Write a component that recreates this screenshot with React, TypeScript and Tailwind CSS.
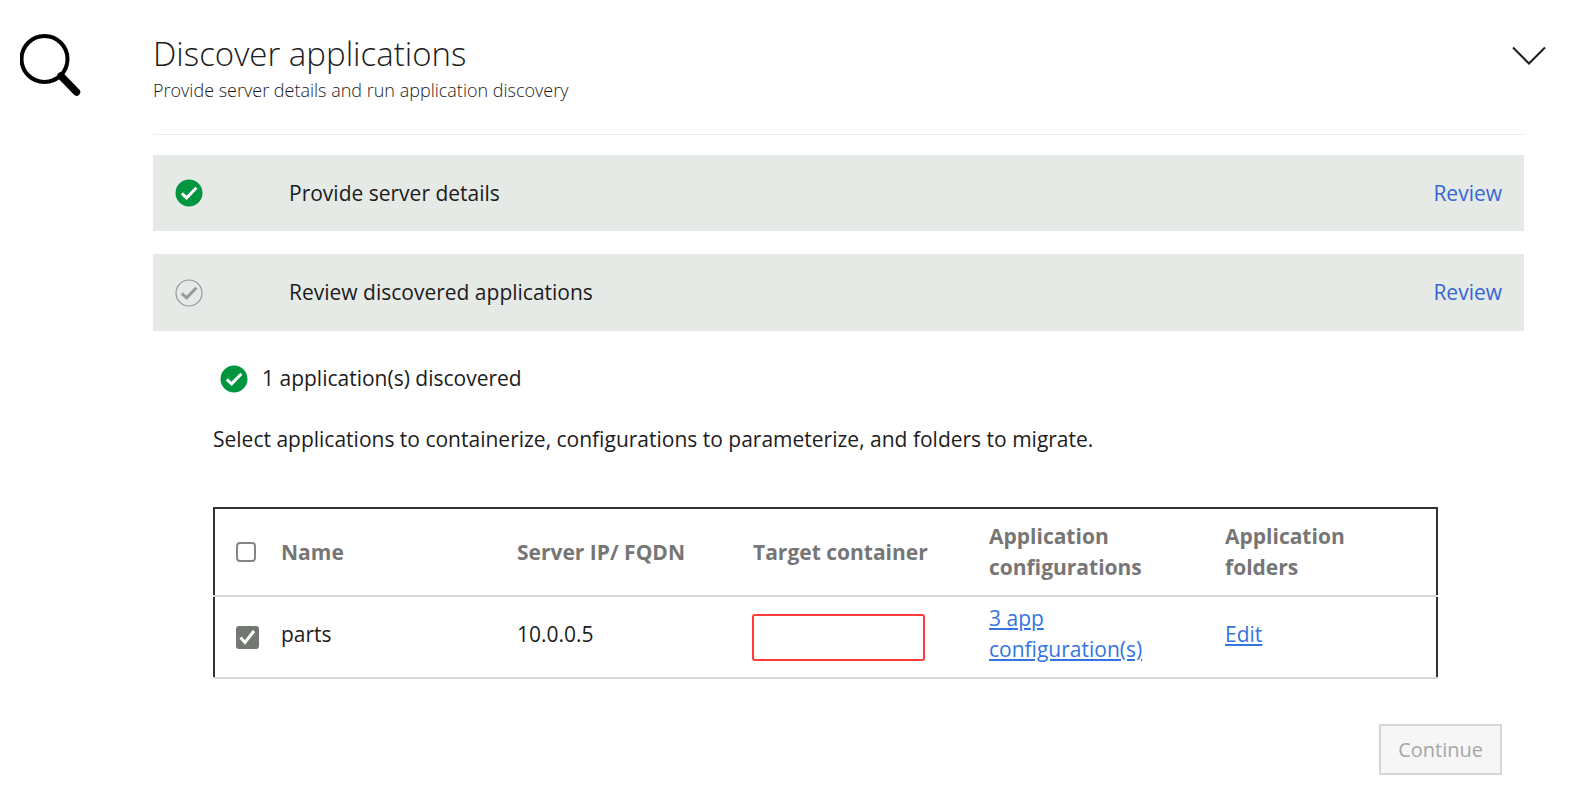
import React from "react";

function DoneIcon() {
  return (
    <svg viewBox="0 0 28 28" className="size-7 shrink-0" aria-hidden="true">
      <circle cx="14" cy="14" r="13.5" fill="#009640" />
      <path d="M6.8 14.4l4.8 4.4L21.4 8.8" fill="none" stroke="#fff" strokeWidth="3" />
    </svg>
  );
}

function PendingIcon() {
  return (
    <svg viewBox="0 0 28 28" className="size-7 shrink-0" aria-hidden="true">
      <circle cx="14" cy="14" r="13" fill="none" stroke="#979a98" strokeWidth="1.2" />
      <path d="M6.8 14.4l4.8 4.4L21.4 8.8" fill="none" stroke="#979a98" strokeWidth="3" />
    </svg>
  );
}

function Step({ icon, title, className }: { icon: React.ReactNode; title: string; className: string }) {
  return (
    <section className={`flex items-center bg-[#e5eae6] px-[22px] ${className}`}>
      {icon}
      <h2 className="ml-[86px] grow">{title}</h2>
      <a href="#review" className="text-[#3566d8]">
        Review
      </a>
    </section>
  );
}

const headings = ["Name", "Server IP/ FQDN", "Target container", "Application configurations", "Application folders"];

export default function App() {
  return (
    <main className="flex min-h-screen items-start bg-white pt-8 pr-[60px] pl-5 font-['Open_Sans','Noto_Sans',sans-serif] text-[21px] leading-[31px] text-[#1c1c1c]">
      <svg viewBox="0 0 64 64" className="size-16 shrink-0" fill="none" stroke="#000" aria-hidden="true">
        <circle cx="24.5" cy="27" r="23" strokeWidth="4" />
        <path d="M41 44L56.5 60" strokeWidth="7.5" strokeLinecap="round" />
        <path d="M38 43L43 42L45 44L40 48Z" fill="#000" stroke="none" />
      </svg>

      <div className="ml-[69px] min-w-0 grow">
        <header className="flex items-start justify-between border-b border-[#ededed] pb-[30px]">
          <div className="font-light">
            <h1 className="text-[33px] leading-[44px]">Discover applications</h1>
            <p className="text-[18px] leading-7">Provide server details and run application discovery</p>
          </div>
          <button type="button" aria-label="Collapse section" className="-mr-[23px] mt-[13px]">
            <svg viewBox="0 0 36 22" className="h-[22px] w-9" fill="none" stroke="#1c1c1c" strokeWidth="2" aria-hidden="true">
              <path d="M2 2.5L18 18.5L34 2.5" />
            </svg>
          </button>
        </header>

        <Step icon={<DoneIcon />} title="Provide server details" className="mt-5 h-[76px]" />
        <Step icon={<PendingIcon />} title="Review discovered applications" className="mt-[23px] h-[77px]" />

        <div className="pt-8 pl-[60px]">
          <div className="flex items-center gap-3.5 pl-[7px]">
            <DoneIcon />
            <p>1 application(s) discovered</p>
          </div>
          <p className="mt-[30px]">
            Select applications to containerize, configurations to parameterize, and folders to migrate.
          </p>

          <div className="mt-[52px] pr-[86px]">
            <table className="w-full table-fixed border-collapse border-x-2 border-t-2 border-[#333] text-left">
              <colgroup>
                <col className="w-[58px]" />
                <col className="w-[236px]" />
                <col className="w-[236px]" />
                <col className="w-[236px]" />
                <col className="w-[236px]" />
                <col />
              </colgroup>
              <thead>
                <tr className="h-[88px] border-b-2 border-b-[#d8d8d8]">
                  <th className="pl-[21px]">
                    <input
                      type="checkbox"
                      aria-label="Select all applications"
                      className="block size-5 appearance-none rounded-[4px] border-2 border-[#858585]"
                    />
                  </th>
                  {headings.map((heading) => (
                    <th key={heading} scope="col" className="pr-10 pl-[9px] font-bold text-[#767676]">
                      {heading}
                    </th>
                  ))}
                </tr>
              </thead>
              <tbody>
                <tr className="border-b-2 border-b-[#d8d8d8]">
                  <td className="pl-[21px]">
                    <span className="grid size-[23px]">
                      <input
                        type="checkbox"
                        defaultChecked
                        aria-label="Select parts"
                        className="peer col-start-1 row-start-1 size-[23px] appearance-none rounded-[3px] border-2 border-[#737873] checked:bg-[#737873]"
                      />
                      <svg
                        viewBox="0 0 23 23"
                        className="pointer-events-none invisible col-start-1 row-start-1 size-[23px] peer-checked:visible"
                        fill="none"
                        stroke="#fff"
                        strokeWidth="3"
                        aria-hidden="true"
                      >
                        <path d="M4.5 11.5L9 16.5L18 5" />
                      </svg>
                    </span>
                  </td>
                  <td className="pt-1.5 pb-3 pl-[9px]">parts</td>
                  <td className="pt-1.5 pb-3 pl-[9px]">10.0.0.5</td>
                  <td className="pl-2">
                    <input
                      type="text"
                      aria-label="Target container for parts"
                      className="block h-[47px] w-[173px] rounded-[3px] border-2 border-[#ff3b3b] px-2"
                    />
                  </td>
                  <td className="pt-1.5 pr-10 pb-3 pl-[9px]">
                    <a href="#configurations" className="text-[#3575e0] underline">
                      3 app configuration(s)
                    </a>
                  </td>
                  <td className="pt-1.5 pb-3 pl-[9px]">
                    <a href="#folders" className="text-[#3575e0] underline">
                      Edit
                    </a>
                  </td>
                </tr>
              </tbody>
            </table>
          </div>

          <div className="mt-[45px] flex justify-end pr-[22px]">
            <button
              type="button"
              disabled
              className="h-[51px] border-2 border-[#d6d6d6] bg-[#f6f6f6] px-[17px] text-[20px] text-[#a6a6a6]"
            >
              Continue
            </button>
          </div>
        </div>
      </div>
    </main>
  );
}
